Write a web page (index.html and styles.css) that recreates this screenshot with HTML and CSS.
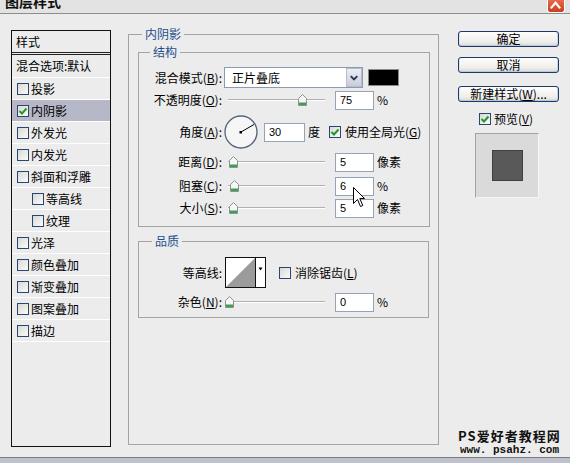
FILE: index.html
```html
<!DOCTYPE html>
<html lang="zh-CN">
<head>
<meta charset="utf-8">
<title>图层样式</title>
<link rel="stylesheet" href="styles.css">
</head>
<body>
<div class="window">
  <div class="titlebar">
    <span class="title">图层样式</span>
    <span class="close"><svg width="18" height="13" viewBox="0 0 18 13"><path d="M4 8.5 L9 2.5 L14 8.5" fill="none" stroke="#fff" stroke-width="2.2"/></svg></span>
  </div>
  <div class="content">
    <div class="style-list">
      <div class="sl-head">样式</div>
      <div class="sl-row sl-blend">混合选项:默认</div>
      <div class="sl-row"><span class="cb"></span>投影</div>
      <div class="sl-row selected"><span class="cb"><svg width="10" height="10" viewBox="0 0 10 10"><path d="M1.5 5 L4 7.5 L8.5 2.5" fill="none" stroke="#1f9a2a" stroke-width="2"/></svg></span>内阴影</div>
      <div class="sl-row"><span class="cb"></span>外发光</div>
      <div class="sl-row"><span class="cb"></span>内发光</div>
      <div class="sl-row"><span class="cb"></span>斜面和浮雕</div>
      <div class="sl-row indent"><span class="cb"></span>等高线</div>
      <div class="sl-row indent"><span class="cb"></span>纹理</div>
      <div class="sl-row"><span class="cb"></span>光泽</div>
      <div class="sl-row"><span class="cb"></span>颜色叠加</div>
      <div class="sl-row"><span class="cb"></span>渐变叠加</div>
      <div class="sl-row"><span class="cb"></span>图案叠加</div>
      <div class="sl-row"><span class="cb"></span>描边</div>
    </div>

    <fieldset class="group outer">
      <legend class="lg lg-outer">内阴影</legend>
      <fieldset class="group structure">
        <legend class="lg lg-inner">结构</legend>
        <div class="row r-blend">
          <span class="lbl">混合模式(<u>B</u>):</span>
          <div class="select"><span class="sel-text">正片叠底</span><span class="sel-btn"><svg width="15" height="19" viewBox="0 0 15 19"><path d="M4 8 L7.5 11.5 L11 8" fill="none" stroke="#2b3550" stroke-width="2"/></svg></span></div>
          <div class="swatch"></div>
        </div>
        <div class="row r-opacity">
          <span class="lbl">不透明度(<u>O</u>):</span>
          <div class="slider"><span class="thumb" style="left:70px"><svg width="9" height="12" viewBox="0 0 9 12"><path d="M4.5 0.5 L8.5 4.5 L8.5 11.5 L0.5 11.5 L0.5 4.5 Z" fill="#f6f6f6" stroke="#8c928c"/><rect x="1" y="8.5" width="7" height="2.5" fill="#3f9d55"/></svg></span></div>
          <div class="num">75</div><span class="unit">%</span>
        </div>
        <div class="row r-angle">
          <span class="lbl">角度(<u>A</u>):</span>
          <div class="dial"><svg width="34" height="34" viewBox="0 0 34 34"><circle cx="17" cy="17" r="16" fill="#f6f6f6" stroke="#56647e" stroke-width="1.3"/><line x1="17" y1="17" x2="30" y2="9.5" stroke="#000" stroke-width="1"/><rect x="15.5" y="16" width="2.5" height="2.5" fill="#000"/></svg></div>
          <div class="num num-angle">30</div><span class="unit u-deg">度</span>
          <span class="cb cb-global"><svg width="10" height="10" viewBox="0 0 10 10"><path d="M1.5 5 L4 7.5 L8.5 2.5" fill="none" stroke="#1f9a2a" stroke-width="2"/></svg></span><span class="cb-text">使用全局光(<u>G</u>)</span>
        </div>
        <div class="row r-dist">
          <span class="lbl">距离(<u>D</u>):</span>
          <div class="slider"><span class="thumb" style="left:1px"><svg width="9" height="12" viewBox="0 0 9 12"><path d="M4.5 0.5 L8.5 4.5 L8.5 11.5 L0.5 11.5 L0.5 4.5 Z" fill="#f6f6f6" stroke="#8c928c"/><rect x="1" y="8.5" width="7" height="2.5" fill="#3f9d55"/></svg></span></div>
          <div class="num">5</div><span class="unit">像素</span>
        </div>
        <div class="row r-choke">
          <span class="lbl">阻塞(<u>C</u>):</span>
          <div class="slider"><span class="thumb" style="left:2px"><svg width="9" height="12" viewBox="0 0 9 12"><path d="M4.5 0.5 L8.5 4.5 L8.5 11.5 L0.5 11.5 L0.5 4.5 Z" fill="#f6f6f6" stroke="#8c928c"/><rect x="1" y="8.5" width="7" height="2.5" fill="#3f9d55"/></svg></span></div>
          <div class="num">6</div><span class="unit">%</span>
        </div>
        <div class="row r-size">
          <span class="lbl">大小(<u>S</u>):</span>
          <div class="slider"><span class="thumb" style="left:1px"><svg width="9" height="12" viewBox="0 0 9 12"><path d="M4.5 0.5 L8.5 4.5 L8.5 11.5 L0.5 11.5 L0.5 4.5 Z" fill="#f6f6f6" stroke="#8c928c"/><rect x="1" y="8.5" width="7" height="2.5" fill="#3f9d55"/></svg></span></div>
          <div class="num">5</div><span class="unit">像素</span>
        </div>
      </fieldset>

      <fieldset class="group quality">
        <legend class="lg lg-quality">品质</legend>
        <div class="row q-contour">
          <span class="lbl">等高线:</span>
          <div class="contour"><svg width="41" height="31" viewBox="0 0 41 31"><rect x="0.5" y="0.5" width="40" height="30" fill="#fff" stroke="#111"/><polygon points="1,30 30,1 30,30" fill="#9b9b9b"/><line x1="30.5" y1="0" x2="30.5" y2="31" stroke="#111"/><polygon points="33.5,10.5 37.5,10.5 35.5,13.5" fill="#000"/></svg></div>
          <span class="cb cb-aa"></span><span class="cb-text">消除锯齿(<u>L</u>)</span>
        </div>
        <div class="row q-noise">
          <span class="lbl">杂色(<u>N</u>):</span>
          <div class="slider"><span class="thumb" style="left:-3px"><svg width="9" height="12" viewBox="0 0 9 12"><path d="M4.5 0.5 L8.5 4.5 L8.5 11.5 L0.5 11.5 L0.5 4.5 Z" fill="#f6f6f6" stroke="#8c928c"/><rect x="1" y="8.5" width="7" height="2.5" fill="#3f9d55"/></svg></span></div>
          <div class="num">0</div><span class="unit">%</span>
        </div>
      </fieldset>
    </fieldset>

    <div class="side">
      <div class="btn btn-ok">确定</div>
      <div class="btn btn-cancel">取消</div>
      <div class="btn btn-new">新建样式(<u>W</u>)...</div>
      <div class="pv-row"><span class="cb"><svg width="10" height="10" viewBox="0 0 10 10"><path d="M1.5 5 L4 7.5 L8.5 2.5" fill="none" stroke="#1f9a2a" stroke-width="2"/></svg></span><span class="pv-text">预览(<u>V</u>)</span></div>
      <div class="preview"><div class="pv-square"></div></div>
      <div class="watermark">
        <div class="wm1">PS爱好者教程网</div>
        <div class="wm2">www. psahz. com</div>
      </div>
    </div>
  </div>
  <div class="bottom-edge"></div>
</div>
<div class="cursor"><svg width="13" height="21" viewBox="0 0 13 21"><path d="M0.5 0.5 L0.5 16.5 L4.5 12.5 L7.5 19.5 L9.8 18.5 L6.8 11.5 L11.5 11.5 Z" fill="#fff" stroke="#000" stroke-width="1" stroke-linejoin="miter"/></svg></div>
</body>
</html>
```

FILE: styles.css
```css
* { box-sizing: border-box; }

html, body {
  margin: 0;
  padding: 0;
}

body {
  width: 570px;
  height: 463px;
  overflow: hidden;
  background: #ececec;
  font-family: "Noto Sans CJK SC", "Noto Sans", sans-serif;
  font-size: 12px;
  line-height: 14px;
  color: #000;
  position: relative;
}

u { text-decoration: underline; text-underline-offset: 1px; }

.window {
  display: flex;
  flex-direction: column;
  height: 463px;
}

/* title bar */
.titlebar {
  height: 14px;
  border-bottom: 1px solid #8d8d8d;
  background: #e3e3e3;
  display: flex;
  justify-content: space-between;
  align-items: flex-start;
  overflow: hidden;
  flex: none;
}
.title {
  font-weight: bold;
  font-size: 14px;
  line-height: 14px;
  padding-left: 5px;
  margin-top: -6px;
  color: #111;
}
.close {
  width: 18px;
  height: 13px;
  margin-right: 5px;
  background: linear-gradient(#e8694c, #c9401f);
  border: 1px solid #fff;
  border-top: none;
  border-radius: 0 0 3px 3px;
  display: flex;
}
.close svg { display: block; margin-left: -1px; }

/* content */
.content {
  height: 443px;
  display: flex;
  align-items: flex-start;
  flex: none;
}

/* left list */
.style-list {
  width: 100px;
  height: 417px;
  margin: 16px 0 0 11px;
  border: 1px solid #111;
  flex: none;
}
.sl-head {
  height: 24px;
  line-height: 21px;
  padding-left: 4px;
  border-bottom: 3px double #222;
}
.sl-row {
  box-sizing: content-box;
  height: 21px;
  border-bottom: 1px solid #fff;
  display: flex;
  align-items: center;
  padding-left: 5px;
  white-space: nowrap;
}
.sl-row.sl-blend {
  height: 22px;
  padding-left: 4px;
}
.sl-row.selected { background: #b6b8c7; }
.sl-row.indent { padding-left: 20px; }
.sl-row .cb { margin-right: 2px; }

/* checkbox */
.cb {
  width: 12px;
  height: 12px;
  border: 1px solid #28466f;
  background: linear-gradient(135deg, #d8d8d4, #fbfbfb);
  display: inline-flex;
  align-items: center;
  justify-content: center;
  flex: none;
}
.cb svg { display: block; }

/* group boxes */
.group {
  margin: 0;
  padding: 0;
  min-width: 0;
  border: 1px solid #a4a4a4;
}
.lg {
  padding: 0 3px;
  font-size: 12px;
  line-height: 14px;
  color: #1f4f8e;
}
.outer {
  width: 311px;
  height: 418px;
  margin: 13px 0 0 17px;
  flex: none;
}
.lg-outer { margin-left: 13px; }
.structure {
  width: 292px;
  margin: 4px 0 0 9px;
  padding: 0 0 8px 0;
}
.lg-inner { margin-left: 11px; }
.quality {
  width: 291px;
  margin: 7px 0 0 9px;
  padding: 9px 0 5px 0;
}
.lg-quality { margin-left: 13px; }

.row {
  display: flex;
  align-items: center;
  white-space: nowrap;
}
.lbl {
  width: 83px;
  text-align: right;
  flex: none;
}
.r-blend { height: 21px; margin-top: 8px; }
.r-opacity { height: 20px; margin-top: 2px; }
.r-angle { height: 34px; margin-top: 5px; }
.r-dist { height: 20px; margin-top: 3px; }
.r-choke { height: 20px; margin-top: 4px; }
.r-size { height: 20px; margin-top: 2px; }
.q-contour { height: 31px; }
.q-noise { height: 20px; margin-top: 4px; }

/* select */
.select {
  width: 139px;
  height: 21px;
  margin-left: 2px;
  border: 1px solid #8c9bb1;
  background: #fff;
  display: flex;
  align-items: center;
  justify-content: space-between;
}
.sel-text { padding-left: 7px; }
.sel-btn {
  width: 16px;
  height: 19px;
  border: 1px solid #b9bccd;
  background: linear-gradient(#eceef5, #c9ccdb);
  display: flex;
}
.sel-btn svg { display: block; margin-top: -1px; }
.swatch {
  width: 31px;
  height: 17px;
  margin-left: 5px;
  background: #000;
  border: 1px solid #8a8a8a;
}

/* slider */
.slider {
  position: relative;
  width: 97px;
  height: 2px;
  margin-left: 6px;
  border-top: 1px solid #b0b0b0;
  border-bottom: 1px solid #fff;
  flex: none;
}
.thumb {
  position: absolute;
  top: -6px;
  width: 9px;
  height: 12px;
}
.thumb svg { display: block; }

/* numeric field */
.num {
  width: 39px;
  height: 19px;
  margin-left: 10px;
  border: 1px solid #95a3b6;
  background: #fff;
  font-family: "Liberation Sans", Arial, sans-serif;
  font-size: 11px;
  line-height: 17px;
  padding-left: 4px;
  flex: none;
}
.num-angle { width: 41px; margin-left: 6px; }
.unit { margin-left: 3px; }
.u-deg { margin-left: 3px; }

.dial { width: 34px; height: 34px; margin-left: 2px; flex: none; }
.dial svg { display: block; }
.cb-global { margin-left: 9px; }
.cb-text { margin-left: 4px; }

.contour { width: 41px; height: 31px; margin-left: 3px; flex: none; }
.contour svg { display: block; }
.cb-aa { margin-left: 13px; }

/* right side */
.side {
  align-self: stretch;
  width: 108px;
  margin: 17px 0 0 19px;
  padding-bottom: 1px;
  display: flex;
  flex-direction: column;
  align-items: flex-start;
  flex: none;
}
.btn {
  width: 101px;
  height: 16px;
  border: 1px solid #1d3a66;
  border-radius: 3px;
  background: linear-gradient(#fefefe, #efeee9 70%, #dcd8cd);
  box-shadow: inset 0 -1px 0 #b7c7e6, inset 1px 0 0 #dfe7f5, inset -1px 0 0 #c7d4ec;
  text-align: center;
  line-height: 14px;
  white-space: nowrap;
}
.btn-cancel { margin-top: 10px; }
.btn-new { margin-top: 13px; }
.pv-row {
  height: 14px;
  margin: 10px 0 0 21px;
  display: flex;
  align-items: center;
}
.pv-text { margin-left: 3px; }
.preview {
  width: 64px;
  height: 65px;
  margin: 7px 0 0 17px;
  border: 1px solid;
  border-color: #a2a2a2 #f6f6f6 #f6f6f6 #a2a2a2;
  background: #dadada;
  display: flex;
  align-items: center;
  justify-content: center;
}
.pv-square {
  width: 31px;
  height: 31px;
  background: #595959;
  border: 1px solid #3f3f3f;
}
.watermark {
  margin-top: auto;
  color: #111;
  white-space: nowrap;
}
.wm1 {
  font-weight: bold;
  font-size: 13px;
  line-height: 13px;
  height: 13px;
  letter-spacing: 1px;
}
.wm2 {
  font-family: "Liberation Mono", "DejaVu Sans Mono", monospace;
  font-weight: bold;
  font-size: 11px;
  line-height: 11px;
  height: 11px;
  margin-top: 3px;
  padding-left: 2px;
}

.bottom-edge {
  height: 6px;
  border-top: 1px solid #7c7c7c;
  background: #bcc1cd;
  flex: none;
}

/* mouse pointer overlay */
.cursor {
  position: absolute;
  left: 353px;
  top: 187px;
  width: 13px;
  height: 21px;
}
.cursor svg { display: block; }
```
